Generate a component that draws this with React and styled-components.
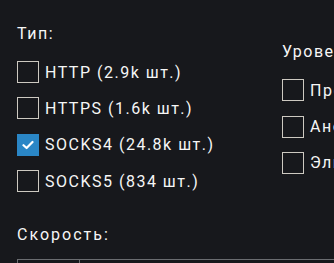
import React from "react";
import styled, { createGlobalStyle } from "styled-components";

const Global = createGlobalStyle`
  html, body { margin: 0; padding: 0; background: #17181c; overflow: hidden; }
  body { font-family: Roboto, "Liberation Sans", sans-serif; color: #f6f6f6; letter-spacing: 1.5px; }
`;

const Page = styled.div`
  width: 334px;
  height: 263px;
  padding: 24px 0 0 17px;
  box-sizing: border-box;
  overflow: hidden;
`;

const Filters = styled.div`
  display: flex;
  align-items: center;
  width: 600px;
`;

const Group = styled.div`
  display: flex;
  flex-direction: column;
  width: ${(p) => p.$w || "auto"};
  flex-shrink: 0;
`;

const Title = styled.div`
  font-size: 16px;
  line-height: 19px;
  margin-bottom: 18px;
  white-space: nowrap;
`;

const List = styled.div`
  display: flex;
  flex-direction: column;
  gap: 14.4px;
`;

const Row = styled.label`
  display: flex;
  align-items: center;
  gap: 6px;
  height: 22px;
  font-size: 16px;
  white-space: nowrap;
`;

const Box = styled.span`
  width: 22px;
  height: 22px;
  box-sizing: border-box;
  border: ${(p) => (p.$checked ? "none" : "1.5px solid #cdc9c1")};
  background: ${(p) => (p.$checked ? "#2a86c6" : "transparent")};
  display: flex;
  align-items: center;
  justify-content: center;
  flex-shrink: 0;
`;

const Speed = styled.div`
  margin-top: 33px;
`;

const SpeedTitle = styled.div`
  font-size: 16px;
  letter-spacing: 2px;
  line-height: 19px;
  margin-bottom: 15px;
`;

const Cells = styled.div`
  display: flex;
`;

const Cell = styled.div`
  width: ${(p) => p.$w};
  height: 30px;
  border-top: 1.5px solid #6a6c70;
  border-left: 1.5px solid #6a6c70;
  box-sizing: border-box;
`;

const Check = () => (
  <svg width="12" height="10" viewBox="0 0 12 10">
    <path d="M1.5 5.2 L4.6 8 L10.5 2" fill="none" stroke="#fff" strokeWidth="2.2" strokeLinecap="round" strokeLinejoin="round" />
  </svg>
);

const Item = ({ checked, children }) => (
  <Row>
    <Box $checked={checked}>{checked && <Check />}</Box>
    {children}
  </Row>
);

export default function App() {
  return (
    <>
      <Global />
      <Page>
        <Filters>
          <Group $w="265px">
            <Title>Тип:</Title>
            <List>
              <Item>HTTP (2.9k шт.)</Item>
              <Item>HTTPS (1.6k шт.)</Item>
              <Item checked>SOCKS4 (24.8k шт.)</Item>
              <Item>SOCKS5 (834 шт.)</Item>
            </List>
          </Group>
          <Group>
            <Title>Уровень анонимности:</Title>
            <List>
              <Item>Прозрачный</Item>
              <Item>Анонимный</Item>
              <Item>Элитный</Item>
            </List>
          </Group>
        </Filters>
        <Speed>
          <SpeedTitle>Скорость:</SpeedTitle>
          <Cells>
            <Cell $w="73px" />
            <Cell $w="300px" />
          </Cells>
        </Speed>
      </Page>
    </>
  );
}
